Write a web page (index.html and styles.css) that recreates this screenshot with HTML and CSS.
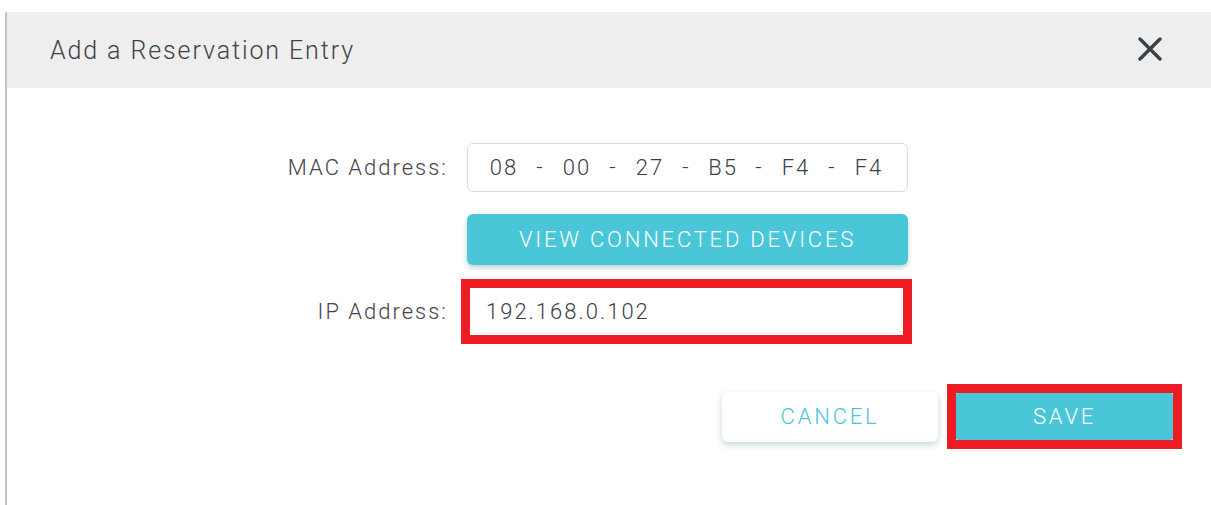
FILE: index.html
```html
<!DOCTYPE html>
<html lang="en">
<head>
<meta charset="utf-8">
<title>Add a Reservation Entry</title>
<link rel="stylesheet" href="styles.css">
</head>
<body>
<div class="dialog">
  <div class="dialog-header">
    <h2 class="dialog-title">Add a Reservation Entry</h2>
    <button class="close-btn" aria-label="Close">
      <svg width="24" height="24" viewBox="0 0 24 24"><path d="M2 2L22 22M22 2L2 22" stroke="currentColor" stroke-width="3.4" stroke-linecap="round"/></svg>
    </button>
  </div>
  <div class="dialog-body">
    <div class="form-grid">
      <label class="field-label">MAC Address:</label>
      <div class="mac-field">
        <span class="octet">08</span><span class="sep">-</span>
        <span class="octet">00</span><span class="sep">-</span>
        <span class="octet">27</span><span class="sep">-</span>
        <span class="octet">B5</span><span class="sep">-</span>
        <span class="octet">F4</span><span class="sep">-</span>
        <span class="octet">F4</span>
      </div>

      <span></span>
      <button class="btn btn-primary btn-devices">VIEW CONNECTED DEVICES</button>

      <label class="field-label row-ip">IP Address:</label>
      <div class="highlight highlight-field row-ip">
        <input class="text-field" type="text" value="192.168.0.102">
      </div>
    </div>

    <div class="dialog-footer">
      <button class="btn btn-secondary">CANCEL</button>
      <div class="highlight">
        <button class="btn btn-primary btn-save">SAVE</button>
      </div>
    </div>
  </div>
</div>
</body>
</html>
```

FILE: styles.css
```css
* {
  box-sizing: border-box;
}

html, body {
  margin: 0;
  padding: 0;
  background: #ffffff;
  overflow: hidden;
}

body {
  font-family: Roboto, "Liberation Sans", Arial, sans-serif;
  color: #4a4f54;
}

.dialog {
  margin: 12px 0 0 5px;
  height: 493px;
  border-left: 2px solid #c4c4c4;
  background: #ffffff;
  display: flex;
  flex-direction: column;
}

.dialog-header {
  height: 76px;
  background: #eeeeee;
  display: flex;
  align-items: center;
  justify-content: space-between;
  padding: 0 49px 0 43px;
}

.dialog-title {
  margin: 0;
  font-size: 25px;
  font-weight: 300;
  color: #3c4247;
  letter-spacing: 1.9px;
}

.close-btn {
  border: none;
  background: none;
  padding: 0;
  width: 24px;
  height: 24px;
  color: #36414a;
  display: flex;
  cursor: pointer;
  margin-top: -2px;
}

.dialog-body {
  padding-top: 55px;
  display: flex;
  flex-direction: column;
}

.form-grid {
  display: grid;
  grid-template-columns: 439px 441px;
  column-gap: 21px;
  row-gap: 22px;
  align-items: center;
}

.field-label {
  text-align: right;
  font-size: 22px;
  font-weight: 300;
  color: #3f454a;
  letter-spacing: 2px;
  margin-right: -2px;
}

.mac-field {
  height: 49px;
  border: 1px solid #dcdcdc;
  border-radius: 6px;
  display: flex;
  align-items: center;
  padding-left: 21px;
  font-size: 22px;
  font-weight: 300;
  color: #3a4046;
  letter-spacing: 2px;
}

.octet {
  width: 30px;
  text-align: center;
  white-space: nowrap;
}

.sep {
  width: 43px;
  text-align: center;
}

.btn {
  font-family: Roboto, "Liberation Sans", Arial, sans-serif;
  font-size: 22px;
  font-weight: 300;
  border: none;
  border-radius: 6px;
  cursor: pointer;
  letter-spacing: 2.8px;
}

.btn-primary {
  background: #49c7d9;
  color: #ffffff;
}

.btn-devices {
  height: 51px;
  box-shadow: 0 3px 5px rgba(40, 90, 100, 0.28);
}

.row-ip {
  margin-top: -8px;
}

.highlight {
  border: 9px solid #ec1c24;
  display: flex;
}

.highlight-field {
  margin-left: -6px;
  margin-right: -4px;
  height: 65px;
}

.text-field {
  flex: 1;
  min-width: 0;
  border: none;
  outline: none;
  background: #ffffff;
  font-family: Roboto, "Liberation Sans", Arial, sans-serif;
  font-size: 22px;
  font-weight: 300;
  color: #3a4046;
  padding: 0 0 0 16px;
  letter-spacing: 2px;
}

.dialog-footer {
  margin-top: 40px;
  display: flex;
  justify-content: flex-end;
  align-items: center;
  gap: 9px;
  padding-right: 29px;
}

.btn-secondary {
  width: 216px;
  height: 50px;
  background: #ffffff;
  color: #49c7d9;
  box-shadow: 0 3px 6px rgba(40, 90, 100, 0.25);
}

.btn-save {
  width: 217px;
  height: 47px;
  border-radius: 2px;
}
```
